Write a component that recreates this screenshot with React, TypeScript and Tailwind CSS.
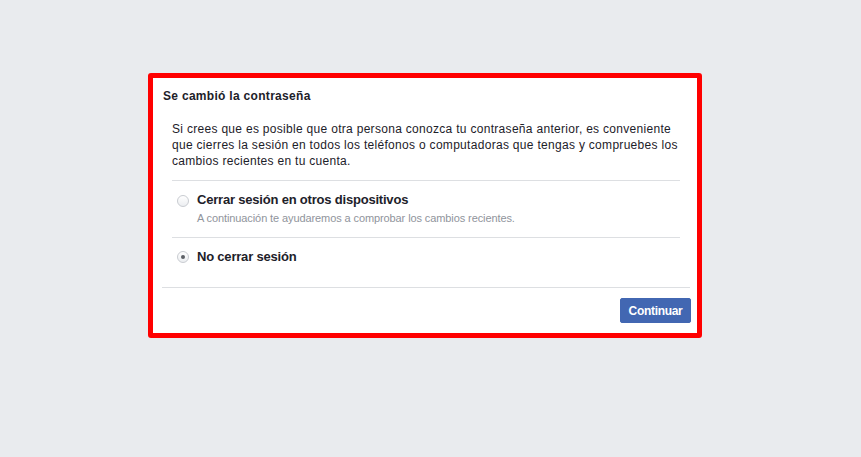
import React, { useState } from 'react';

type Choice = 'logout' | 'stay';

const Radio = ({ checked }: { checked: boolean }) => (
  <span className="flex h-[12px] w-[12px] shrink-0 items-center justify-center rounded-full border border-[#c9ccd1] bg-gradient-to-b from-[#ffffff] to-[#eceef1]">
    {checked && <span className="h-[4px] w-[4px] rounded-full bg-[#5d6066]" />}
  </span>
);

export default function App() {
  const [choice, setChoice] = useState<Choice>('stay');

  return (
    <div
      className="min-h-screen bg-[#e9ebee] pl-[148px] pt-[73px] text-[#1d2129]"
      style={{ fontFamily: '"Liberation Sans", Arial, Helvetica, sans-serif' }}
    >
      <div className="w-[554px] rounded-[3px] border-[5px] border-[#ff0000] bg-white">
        {/* header */}
        <div className="pl-[10px] pt-[10px] text-[12px] font-bold leading-[16px] tracking-[0.3px]">
          Se cambió la contraseña
        </div>

        {/* body */}
        <div className="ml-[19px] mr-[17px] mt-[17px]">
          <p className="text-[12px] leading-[16px] tracking-[0.3px]">
            Si crees que es posible que otra persona conozca tu contraseña anterior, es conveniente que cierres
            la sesión en todos los teléfonos o computadoras que tengas y compruebes los cambios recientes en tu
            cuenta.
          </p>

          <div className="mt-[11px] border-t border-[#dddfe2]" />

          <label
            className="mt-[10px] flex cursor-pointer items-start pl-[5px]"
            onClick={() => setChoice('logout')}
          >
            <span className="mt-[4px]">
              <Radio checked={choice === 'logout'} />
            </span>
            <span className="ml-[8px]">
              <span className="block text-[13px] font-bold leading-[18px] tracking-[-0.2px]">
                Cerrar sesión en otros dispositivos
              </span>
              <span className="mt-[2px] block text-[11px] leading-[14px] tracking-[-0.1px] text-[#90949c]">
                A continuación te ayudaremos a comprobar los cambios recientes.
              </span>
            </span>
          </label>

          <div className="mt-[12px] border-t border-[#dddfe2]" />

          <label
            className="mt-[10px] flex cursor-pointer items-center pl-[5px]"
            onClick={() => setChoice('stay')}
          >
            <Radio checked={choice === 'stay'} />
            <span className="ml-[8px] text-[13px] font-bold leading-[18px] tracking-[-0.2px]">No cerrar sesión</span>
          </label>
        </div>

        {/* footer */}
        <div className="ml-[9px] mr-[7px] mt-[21px] border-t border-[#dddfe2]" />
        <div className="flex justify-end pb-[10px] pr-[6px] pt-[10px]">
          <button className="h-[25px] w-[71px] rounded-[2px] border border-[#4267b2] bg-[#4267b2] text-[12px] font-bold tracking-[-0.3px] text-white">
            Continuar
          </button>
        </div>
      </div>
    </div>
  );
}
